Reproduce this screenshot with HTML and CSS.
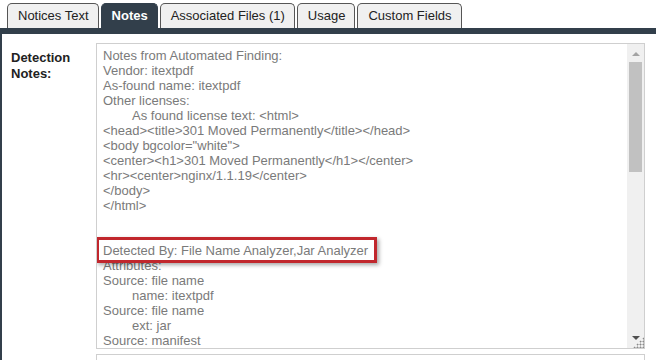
FILE: index.html
```html
<!DOCTYPE html>
<html>
<head>
<meta charset="utf-8">
<link rel="stylesheet" href="styles.css">
</head>
<body>
<div class="tabs">
  <div class="tab">Notices Text</div>
  <div class="tab active">Notes</div>
  <div class="tab">Associated Files (1)</div>
  <div class="tab">Usage</div>
  <div class="tab">Custom Fields</div>
</div>
<div class="panel">
  <div class="label">Detection Notes:</div>
  <div class="fields">
    <div class="notes-box">
      <div class="notes-text">
        <div>Notes from Automated Finding:</div>
        <div>Vendor: itextpdf</div>
        <div>As-found name: itextpdf</div>
        <div>Other licenses:</div>
        <div class="ind">As found license text: &lt;html&gt;</div>
        <div>&lt;head&gt;&lt;title&gt;301 Moved Permanently&lt;/title&gt;&lt;/head&gt;</div>
        <div>&lt;body bgcolor="white"&gt;</div>
        <div>&lt;center&gt;&lt;h1&gt;301 Moved Permanently&lt;/h1&gt;&lt;/center&gt;</div>
        <div>&lt;hr&gt;&lt;center&gt;nginx/1.1.19&lt;/center&gt;</div>
        <div>&lt;/body&gt;</div>
        <div>&lt;/html&gt;</div>
        <div>&nbsp;</div>
        <div>&nbsp;</div>
        <div>Detected By: File Name Analyzer,Jar Analyzer</div>
        <div>Attributes:</div>
        <div>Source: file name</div>
        <div class="ind">name: itextpdf</div>
        <div>Source: file name</div>
        <div class="ind">ext: jar</div>
        <div>Source: manifest</div>
      </div>
      <div class="scrollbar">
        <div class="arrow up"></div>
        <div class="thumb"></div>
        <div class="spacer"></div>
        <div class="arrow down"></div>
        <div class="grip"></div>
      </div>
      <div class="highlight"></div>
    </div>
    <div class="next-box"></div>
  </div>
</div>
</body>
</html>
```
FILE: styles.css
```css
html, body {
  margin: 0;
  padding: 0;
  background: #fff;
  font-family: "Liberation Sans", Arial, sans-serif;
  font-size: 13px;
  overflow: hidden;
}
.tabs {
  display: flex;
  gap: 2px;
  padding: 3px 0 0 7px;
  height: 25px;
}
.tab {
  border: 1px solid #555;
  border-bottom: none;
  border-radius: 5px 5px 0 0;
  background: #f0f0f0;
  color: #222;
  padding: 0 9px 0 10px;
  line-height: 24px;
  white-space: nowrap;
}
.tab.active {
  background: #323f4b;
  border-color: #323f4b;
  color: #fff;
  font-weight: bold;
}
.panel {
  border-top: 6px solid #323f4b;
  border-left: 2px solid #323f4b;
  display: flex;
  padding: 9px 0 0 9px;
  height: 330px;
  overflow: hidden;
}
.label {
  width: 85px;
  flex: none;
  font-weight: bold;
  color: #222;
  line-height: 16px;
  padding-top: 7px;
}
.fields {
  display: flex;
  flex-direction: column;
}
.notes-box {
  position: relative;
  flex: none;
  width: 547px;
  height: 304px;
  border: 1px solid #cfcfcf;
  display: flex;
  overflow: hidden;
}
.notes-text {
  flex: 1;
  padding: 4px 0 0 6px;
  color: #7a7a7a;
  line-height: 15px;
  white-space: nowrap;
  overflow: hidden;
}
.ind {
  padding-left: 29px;
}
.scrollbar {
  width: 17px;
  flex: none;
  background: #f0f0f0;
  display: flex;
  flex-direction: column;
  align-items: center;
  position: relative;
}
.arrow {
  width: 0;
  height: 0;
  border-left: 4px solid transparent;
  border-right: 4px solid transparent;
}
.arrow.up {
  margin-top: 8px;
  border-bottom: 4px solid #a3a3a3;
}
.thumb {
  margin-top: 6px;
  width: 13px;
  height: 110px;
  background: #c1c1c1;
}
.spacer {
  flex: 1;
}
.arrow.down {
  margin-bottom: 8px;
  border-top: 4px solid #505050;
}
.grip {
  position: absolute;
  right: 0;
  bottom: 0;
  width: 11px;
  height: 11px;
  background-image: radial-gradient(circle, #8a8a8a 0.9px, transparent 1.1px);
  background-size: 3px 3px;
  clip-path: polygon(100% 0, 100% 100%, 0 100%);
}
.highlight {
  position: absolute;
  left: -1px;
  top: 193px;
  width: 281px;
  height: 26px;
  box-sizing: border-box;
  border: 3px solid #c1272d;
  box-shadow: 2px 2px 4px rgba(0, 0, 0, 0.35);
}
.next-box {
  flex: none;
  margin-top: 5px;
  width: 547px;
  height: 20px;
  border: 1px solid #cfcfcf;
}
```
